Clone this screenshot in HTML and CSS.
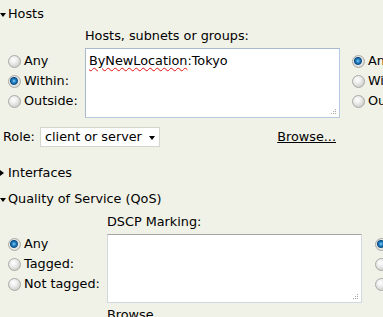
FILE: index.html
```html
<!DOCTYPE html>
<html>
  <head>
    <meta charset="UTF-8">
    <title>Filter</title>
    <link rel="stylesheet" href="styles.css">
  </head>
  <body>
    <div class="page">
      <div class="section-head open">Hosts</div>
      <div class="filter-row hosts">
        <div class="radio-col left">
          <label class="radio"><span class="dot"></span>Any</label>
          <label class="radio"><span class="dot on"></span>Within:</label>
          <label class="radio"><span class="dot"></span>Outside:</label>
        </div>
        <div class="field-col">
          <div class="field-label">Hosts, subnets or groups:</div>
          <div class="textbox"><span class="misspelled">ByNewLocation</span>:Tokyo<svg class="grip" width="5" height="5"><rect x="4" y="0" width="1" height="1"/><rect x="2" y="2" width="1" height="1"/><rect x="4" y="2" width="1" height="1"/><rect x="0" y="4" width="1" height="1"/><rect x="2" y="4" width="1" height="1"/><rect x="4" y="4" width="1" height="1"/></svg></div>
        </div>
        <div class="radio-col right">
          <label class="radio"><span class="dot on"></span>Any</label>
          <label class="radio"><span class="dot"></span>Within:</label>
          <label class="radio"><span class="dot"></span>Outside:</label>
        </div>
      </div>
      <div class="role-row">
        <span class="role-label">Role:</span>
        <div class="select">client or server<span class="arrow"></span></div>
        <a class="browse" href="#">Browse...</a>
      </div>
      <div class="section-head closed">Interfaces</div>
      <div class="section-head open">Quality of Service (QoS)</div>
      <div class="filter-row qos">
        <div class="radio-col left">
          <label class="radio"><span class="dot on"></span>Any</label>
          <label class="radio"><span class="dot"></span>Tagged:</label>
          <label class="radio"><span class="dot"></span>Not tagged:</label>
        </div>
        <div class="field-col">
          <div class="field-label">DSCP Marking:</div>
          <div class="textbox plain"><svg class="grip" width="5" height="5"><rect x="4" y="0" width="1" height="1"/><rect x="2" y="2" width="1" height="1"/><rect x="4" y="2" width="1" height="1"/><rect x="0" y="4" width="1" height="1"/><rect x="2" y="4" width="1" height="1"/><rect x="4" y="4" width="1" height="1"/></svg></div>
          <a class="browse" href="#">Browse...</a>
        </div>
        <div class="radio-col right">
          <label class="radio"><span class="dot on"></span>Any</label>
          <label class="radio"><span class="dot"></span>Tagged:</label>
          <label class="radio"><span class="dot"></span>Not tagged:</label>
        </div>
      </div>
    </div>
  </body>
</html>
```

FILE: styles.css
```css
html, body {
    margin: 0;
    overflow: hidden;
    background-color: #f1f2e7;
}

body {
    font-family: "DejaVu Sans", Verdana, sans-serif;
    font-size: 12.8px;
    line-height: 16px;
    color: #000;
}

.page {
    width: 520px;
    padding-top: 6px;
}

.section-head {
    position: relative;
    padding-left: 8px;
    margin-top: 10px;
}

.section-head:first-child {
    margin-top: 0;
}

.section-head::before {
    content: "";
    position: absolute;
    left: 0;
    width: 0;
    height: 0;
}

.section-head.open::before {
    top: 7px;
    border-left: 3px solid transparent;
    border-right: 3px solid transparent;
    border-top: 4px solid #000;
}

.section-head.closed::before {
    top: 5px;
    border-top: 3px solid transparent;
    border-bottom: 3px solid transparent;
    border-left: 4px solid #000;
}

.filter-row {
    display: flex;
    margin-top: 6px;
}

.filter-row.qos {
    margin-top: 7px;
}

.radio-col {
    display: flex;
    flex-direction: column;
    padding-top: 23px;
}

.qos .radio-col {
    padding-top: 20px;
}

.radio-col.left {
    width: 77px;
    padding-left: 8px;
}

.qos .radio-col.left {
    width: 99px;
}

.radio-col.right {
    margin-left: 12px;
}

.qos .radio-col.right {
    margin-left: 13px;
}

.radio {
    display: flex;
    align-items: center;
    height: 20px;
    white-space: nowrap;
}

.dot {
    width: 13px;
    height: 13px;
    margin-right: 3px;
    border-radius: 50%;
    border: 1px solid #a9aaa8;
    box-sizing: border-box;
    background: radial-gradient(circle at 40% 35%, #ffffff 0, #eeeeee 35%, #d0d0cc 75%, #c2c2be 100%);
}

.dot.on {
    background: radial-gradient(circle at 45% 45%, #9ad6f7 0, #2c8fd0 1.5px, #0c4d86 3.5px, #e9e9e6 4.5px, #d4d4d0 80%, #c2c2be 100%);
}

.field-col {
    display: flex;
    flex-direction: column;
    width: 255px;
}

.field-label {
    margin-bottom: 4px;
}

.textbox {
    position: relative;
    height: 70px;
    padding: 4px 3px;
    box-sizing: border-box;
    background-color: #fff;
    border: 1px solid #b6cbe0;
    border-top-color: #a9b9ca;
    border-left-color: #a9b9ca;
}

.textbox.plain {
    height: 69px;
    border-color: #d2d8e0;
    border-top-color: #a5a5a5;
}

.misspelled {
    text-decoration: underline wavy #e01010;
    text-decoration-thickness: 1px;
    text-underline-offset: 2px;
}

.grip {
    position: absolute;
    right: 3px;
    bottom: 3px;
    fill: #a8a8a8;
}

.role-row {
    display: flex;
    align-items: center;
    width: 340px;
    height: 20px;
    margin-top: 9px;
    margin-bottom: 18px;
}

.role-label {
    width: 37px;
    padding-left: 3px;
}

.select {
    position: relative;
    width: 120px;
    height: 20px;
    padding-left: 4px;
    box-sizing: border-box;
    line-height: 18px;
    background-color: #fff;
    border: 1px solid #d4d6cc;
}

.select .arrow {
    position: absolute;
    right: 4px;
    top: 8px;
    width: 0;
    height: 0;
    border-left: 3px solid transparent;
    border-right: 3px solid transparent;
    border-top: 4px solid #000;
}

.browse {
    color: #000;
    text-decoration: underline;
    margin-left: auto;
    padding-right: 4px;
}

.qos .browse {
    margin-left: 0;
    margin-top: 4px;
}
```
